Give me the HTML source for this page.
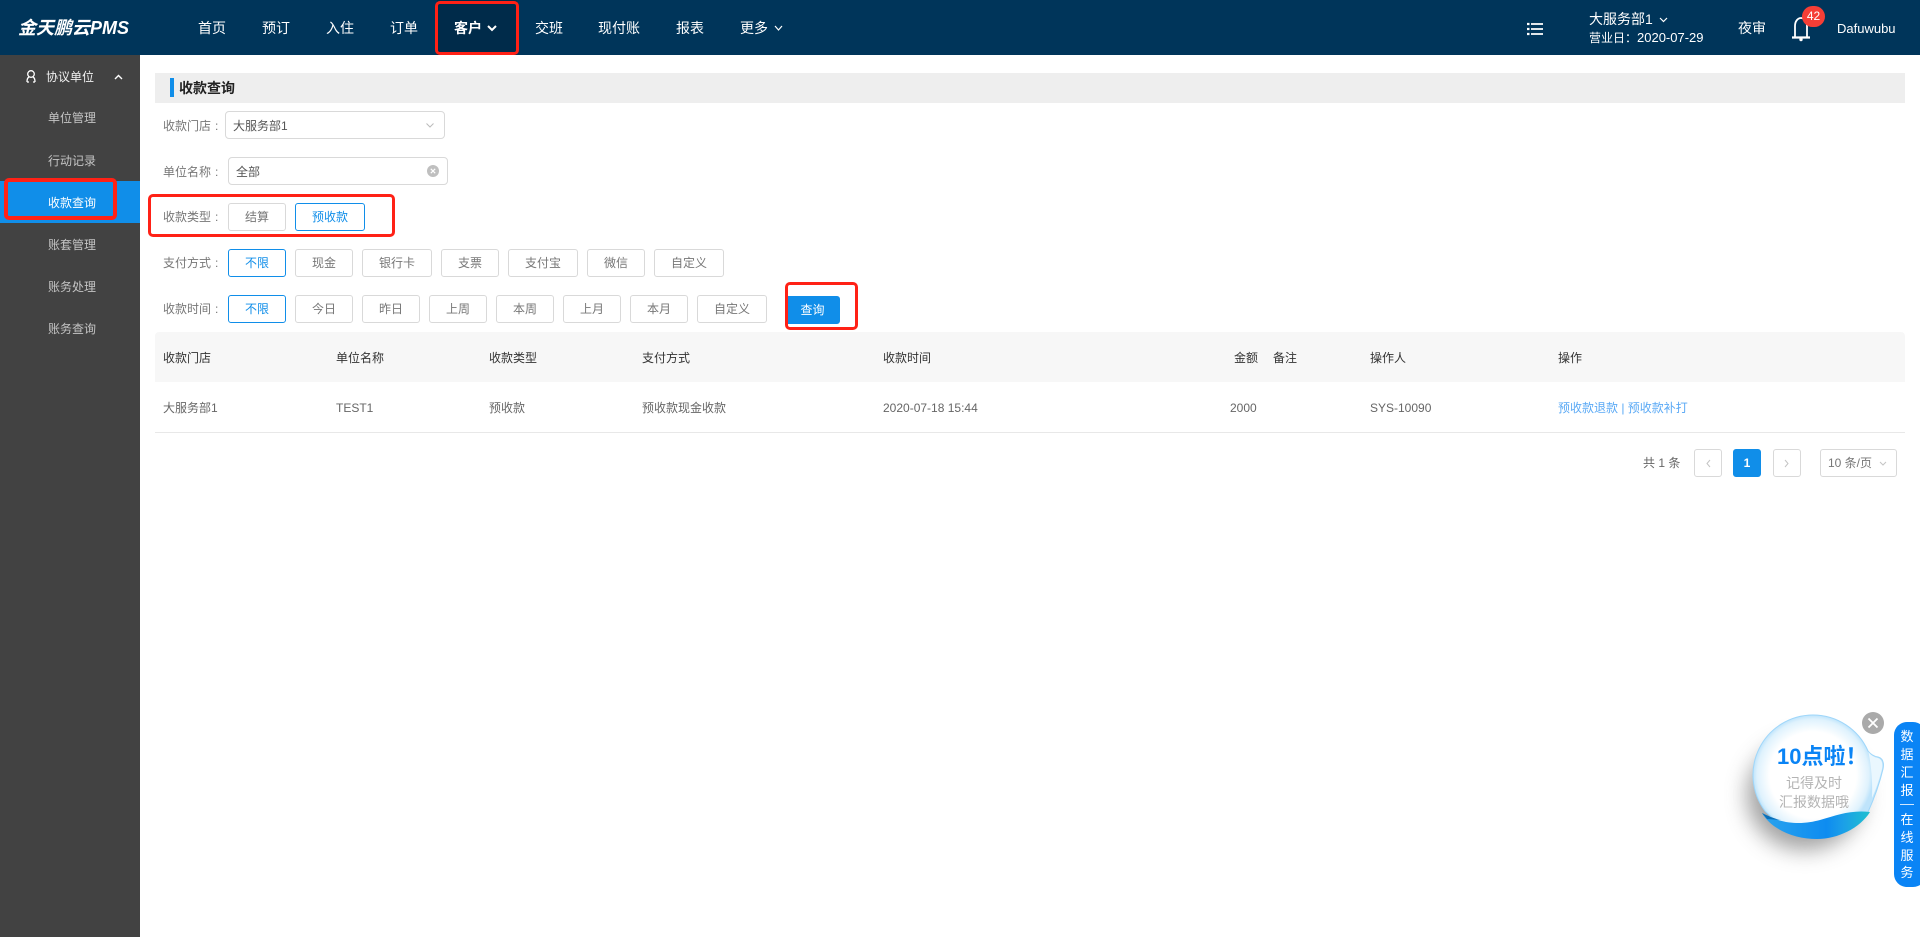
<!DOCTYPE html>
<html lang="zh-CN">
<head>
<meta charset="utf-8">
<title>收款查询</title>
<style>
*{box-sizing:border-box}
html,body{margin:0;padding:0;width:1920px;height:937px;overflow:hidden;background:#fff;font-family:"Liberation Sans","Noto Sans CJK SC",sans-serif;font-size:12px;color:#666}
.a{position:absolute}
.t{position:absolute;white-space:nowrap;line-height:20px;height:20px}
.n{font-size:14px;color:#fff}
.m{color:#c4c4c4;left:48px}
.l{left:163px;color:#777}
.l i{font-style:normal;margin-left:4px}
.b{position:absolute;height:28px;border:1px solid #d9d9d9;border-radius:3px;text-align:center;line-height:26px;color:#777;background:#fff;white-space:nowrap}
.on{border-color:#108ee9;color:#108ee9}
.r{position:absolute;border:3px solid #ff2116;border-radius:5px}
.h{color:#333;top:348px}
.c{color:#666;top:398px}
.w{color:#fff;font-size:13px;left:1894px;width:26px;text-align:center}
svg{position:absolute;overflow:visible}
</style>
</head>
<body>
<div class="a" style="left:0;top:0;width:1920px;height:55px;background:#00355a"></div>
<div class="a" style="left:437px;top:0;width:80px;height:55px;background:#002b4a"></div>
<div class="t" style="left:18px;top:18px;font-size:18px;font-weight:bold;font-style:italic;color:#fff">金天鹏云PMS</div>
<div class="t n" style="left:198px;top:18px">首页</div>
<div class="t n" style="left:262px;top:18px">预订</div>
<div class="t n" style="left:326px;top:18px">入住</div>
<div class="t n" style="left:390px;top:18px">订单</div>
<div class="t n" style="left:454px;top:18px;font-weight:bold">客户</div>
<svg style="left:0;top:0" width="1920" height="55" fill="none" stroke="#fff" stroke-width="1.5">
<path d="M488 26l4 4 4-4" stroke-width="2"/>
<path d="M775 26l3.500 4 3.500-4" stroke-width="1.2"/>
<path d="M1660 18l3.500 3.500 3.500-3.500" stroke-width="1.200"/>
<path d="M1531 24h12M1531 29h12M1531 34h12" stroke-width="1.700"/>
<path d="M1527 24h2.500M1527 29h2.500M1527 34h2.500" stroke-width="2.200"/>
<path d="M1795 37V26c0-5 3-8 6-8s6 3 6 8v11" stroke-width="1.800"/>
<path d="M1792 37.500h18" stroke-width="2.200"/>
<circle cx="1801" cy="39.500" r="1.700" fill="#fff" stroke="none"/>
</svg>
<div class="t n" style="left:535px;top:18px">交班</div>
<div class="t n" style="left:598px;top:18px">现付账</div>
<div class="t n" style="left:676px;top:18px">报表</div>
<div class="t n" style="left:740px;top:18px">更多</div>
<div class="t n" style="left:1589px;top:9px">大服务部1</div>
<div class="t" style="left:1589px;top:28px;font-size:13px;color:#fff"><span style="font-size:12px">营业日：</span>2020-07-29</div>
<div class="t n" style="left:1738px;top:18px">夜审</div>
<div class="a" style="left:1802px;top:6px;width:23px;height:21px;border-radius:11px;background:#f53e36;color:#fff;text-align:center;line-height:21px;font-size:12px">42</div>
<div class="t" style="left:1837px;top:19px;font-size:13px;color:#fff">Dafuwubu</div>

<div class="a" style="left:0;top:55px;width:140px;height:882px;background:#424242"></div>
<div class="a" style="left:0;top:181px;width:140px;height:42px;background:#108ee9"></div>
<svg style="left:0;top:55px" width="140" height="40" fill="none" stroke="#fff" stroke-width="1.300">
<circle cx="31" cy="19" r="3.300"/>
<path d="M27 27c0-3 1-4.500 2-5M35 27c0-3-1-4.500-2-5M27 27h2M33 27h2"/>
<path d="M115 24l3.500-3.500 3.500 3.500" stroke-width="1.400"/>
</svg>
<div class="t" style="left:46px;top:67px;color:#f0f0f0">协议单位</div>
<div class="t m" style="top:108px">单位管理</div>
<div class="t m" style="top:151px">行动记录</div>
<div class="t" style="left:48px;top:193px;color:#fff">收款查询</div>
<div class="t m" style="top:235px">账套管理</div>
<div class="t m" style="top:277px">账务处理</div>
<div class="t m" style="top:319px">账务查询</div>

<div class="a" style="left:155px;top:73px;width:1750px;height:30px;background:#eee"></div>
<div class="a" style="left:170px;top:78px;width:4px;height:19px;background:#108ee9"></div>
<div class="t" style="left:179px;top:78px;font-size:14px;font-weight:bold;color:#222">收款查询</div>

<div class="t l" style="top:116px">收款门店<i>:</i></div>
<div class="b" style="left:225px;top:111px;width:220px;text-align:left;padding-left:7px;border-radius:4px;line-height:28px;color:#555">大服务部1</div>
<svg style="left:0;top:0" width="500" height="200" fill="none">
<path d="M426.500 123.500l3.500 3.500 3.500-3.500" stroke="#bbb" stroke-width="1"/>
<circle cx="433" cy="171" r="6" fill="#bfbfbf"/>
<path d="M430.800 168.800l4.400 4.400M435.200 168.800l-4.400 4.400" stroke="#fff" stroke-width="1.200"/>
</svg>
<div class="t l" style="top:162px">单位名称<i>:</i></div>
<div class="b" style="left:228px;top:157px;width:220px;text-align:left;padding-left:7px;border-radius:4px;background:transparent;line-height:28px;color:#555">全部</div>
<div class="t l" style="top:207px">收款类型<i>:</i></div>
<div class="b" style="left:228px;top:203px;width:58px">结算</div>
<div class="b on" style="left:295px;top:203px;width:70px">预收款</div>
<div class="t l" style="top:253px">支付方式<i>:</i></div>
<div class="b on" style="left:228px;top:249px;width:58px">不限</div>
<div class="b" style="left:295px;top:249px;width:58px">现金</div>
<div class="b" style="left:362px;top:249px;width:70px">银行卡</div>
<div class="b" style="left:441px;top:249px;width:58px">支票</div>
<div class="b" style="left:508px;top:249px;width:70px">支付宝</div>
<div class="b" style="left:587px;top:249px;width:58px">微信</div>
<div class="b" style="left:654px;top:249px;width:70px">自定义</div>
<div class="t l" style="top:299px">收款时间<i>:</i></div>
<div class="b on" style="left:228px;top:295px;width:58px">不限</div>
<div class="b" style="left:295px;top:295px;width:58px">今日</div>
<div class="b" style="left:362px;top:295px;width:58px">昨日</div>
<div class="b" style="left:429px;top:295px;width:58px">上周</div>
<div class="b" style="left:496px;top:295px;width:58px">本周</div>
<div class="b" style="left:563px;top:295px;width:58px">上月</div>
<div class="b" style="left:630px;top:295px;width:58px">本月</div>
<div class="b" style="left:697px;top:295px;width:70px">自定义</div>
<div class="b" style="left:785px;top:296px;width:55px;background:#108ee9;border-color:#108ee9;color:#fff">查询</div>

<div class="a" style="left:155px;top:332px;width:1750px;height:50px;background:#f7f7f7;border-radius:4px 4px 0 0"></div>
<div class="a" style="left:155px;top:432px;width:1750px;height:1px;background:#e8e8e8"></div>
<div class="t h" style="left:163px">收款门店</div>
<div class="t h" style="left:336px">单位名称</div>
<div class="t h" style="left:489px">收款类型</div>
<div class="t h" style="left:642px">支付方式</div>
<div class="t h" style="left:883px">收款时间</div>
<div class="t h" style="left:1234px">金额</div>
<div class="t h" style="left:1273px">备注</div>
<div class="t h" style="left:1370px">操作人</div>
<div class="t h" style="left:1558px">操作</div>
<div class="t c" style="left:163px">大服务部1</div>
<div class="t c" style="left:336px">TEST1</div>
<div class="t c" style="left:489px">预收款</div>
<div class="t c" style="left:642px">预收款现金收款</div>
<div class="t c" style="left:883px">2020-07-18 15:44</div>
<div class="t c" style="left:1230px">2000</div>
<div class="t c" style="left:1370px">SYS-10090</div>
<div class="t" style="left:1558px;top:398px;color:#5aa9f5">预收款退款 | 预收款补打</div>

<div class="t" style="left:1643px;top:453px;color:#666">共 1 条</div>
<div class="b" style="left:1694px;top:449px;width:28px"></div>
<div class="b" style="left:1733px;top:449px;width:28px;background:#108ee9;border-color:#108ee9;color:#fff;font-weight:bold">1</div>
<div class="b" style="left:1773px;top:449px;width:28px"></div>
<div class="b" style="left:1820px;top:449px;width:77px;text-align:left;padding-left:7px">10 条/页</div>
<svg style="left:0;top:0" width="1920" height="500" fill="none" stroke="#c4c4c4" stroke-width="1">
<path d="M1710 460l-3 3.500 3 3.500M1785 460l3 3.500-3 3.500M1880 462l3 3 3-3"/>
</svg>

<div class="r" style="left:435px;top:1px;width:84px;height:54px"></div>
<div class="r" style="left:4px;top:178px;width:113px;height:42px;border-width:4px"></div>
<div class="r" style="left:148px;top:194px;width:247px;height:43px"></div>
<div class="r" style="left:785px;top:282px;width:73px;height:48px;border-left-width:3px"></div>

<svg style="left:0;top:0" width="1920" height="937">
<defs>
<filter id="bl" x="-40%" y="-40%" width="180%" height="180%"><feGaussianBlur stdDeviation="11"/></filter>
<radialGradient id="bg" gradientUnits="userSpaceOnUse" cx="1813" cy="775" r="60">
<stop offset="0" stop-color="#fff"/><stop offset=".72" stop-color="#fff"/><stop offset=".93" stop-color="#dff2fd"/><stop offset="1" stop-color="#bfe4fb"/>
</radialGradient>
<linearGradient id="rb" x1="0" y1="0" x2="1" y2="0">
<stop offset="0" stop-color="#2aa3ee"/><stop offset=".6" stop-color="#0e8cf0"/><stop offset=".75" stop-color="#1b9fe8"/><stop offset="1" stop-color="#1fc0d0"/>
</linearGradient>
</defs>
<ellipse cx="1805" cy="795" rx="58" ry="55" fill="#555" opacity=".55" filter="url(#bl)"/>
<path d="M1813 715A60 60 0 0 1 1868 751Q1872 756 1878 757Q1885 759 1883 769Q1878 790 1868 812L1850 830L1785 830L1765 811A60 60 0 0 1 1813 715Z" fill="url(#bg)" stroke="#9ed6fa" stroke-width="1"/>
<path d="M1868.500 752Q1872 757 1878 758Q1883.500 760 1882 769Q1878 785 1872 798Q1873 775 1868.500 752Z" fill="#eaf7fe"/>
<path d="M1762 813C1785 826 1805 824 1820 820C1838 815 1850 810 1870 812C1860 828 1838 839 1817 839C1795 839 1772 830 1762 813Z" fill="url(#rb)"/>
<path d="M1762 813C1768 816 1775 819 1781 820L1767 819Z" fill="#0b6fb8"/>
<circle cx="1873" cy="723" r="11" fill="#aaa"/>
<path d="M1868.500 718.500l9 9M1877.500 718.500l-9 9" stroke="#fff" stroke-width="1.800"/>
<rect x="1894" y="722" width="32" height="165" rx="13" fill="#0a84f5"/>
<rect x="1900" y="804" width="14" height="1" fill="#cfe6fd"/>
</svg>
<div class="t" style="left:1777px;top:747px;font-size:22px;font-weight:bold;color:#0a84f5">10点啦！</div>
<div class="t" style="left:1786px;top:773px;font-size:14px;color:#b4b4b4">记得及时</div>
<div class="t" style="left:1779px;top:792px;font-size:14px;color:#b4b4b4">汇报数据哦</div>
<div class="t w" style="top:727px">数</div>
<div class="t w" style="top:745px">据</div>
<div class="t w" style="top:763px">汇</div>
<div class="t w" style="top:781px">报</div>
<div class="t w" style="top:810px">在</div>
<div class="t w" style="top:828px">线</div>
<div class="t w" style="top:846px">服</div>
<div class="t w" style="top:863px">务</div>
</body>
</html>
